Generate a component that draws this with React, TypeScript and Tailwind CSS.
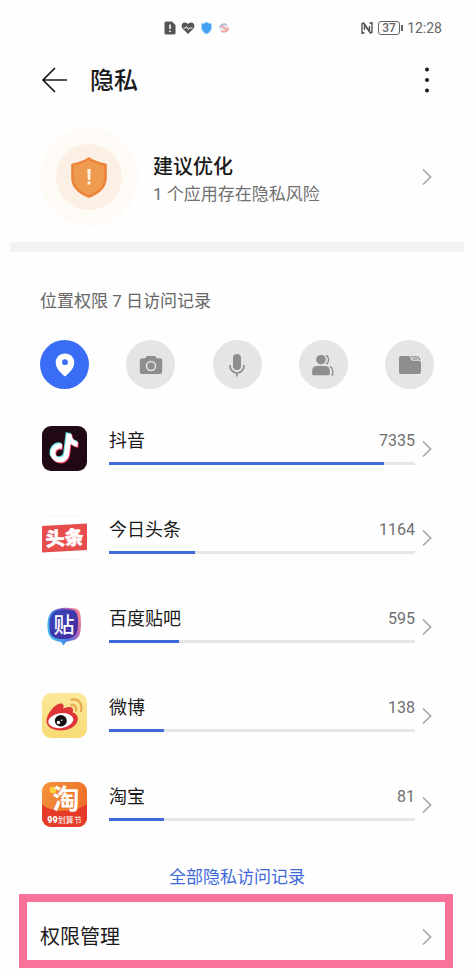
import { useState, type ReactNode } from "react";
import { FaTiktok } from "react-icons/fa6";

function Chevron() {
  return (
    <svg width="10" height="18" viewBox="0 0 10 18" fill="none" stroke="#a6a6a6" strokeWidth="1.6" aria-hidden="true" className="shrink-0">
      <path d="M1 1.5 8.7 9 1 16.5" />
    </svg>
  );
}

function StatusBar() {
  return (
    <div className="flex h-14 items-center pl-[164px] pr-8 text-[#666]">
      <div className="flex items-center gap-[5px]">
        <svg width="12" height="14" viewBox="0 0 12 14" aria-hidden="true">
          <path d="M2 .5h6l3.500 3.500v8A1.500 1.500 0 0 1 10 13.500H2A1.500 1.500 0 0 1 .5 12V2A1.500 1.500 0 0 1 2 .5Z" fill="#555" />
          <path d="M6 3.500v4.500M6 9.500v1.600" stroke="#fff" strokeWidth="1.600" />
        </svg>
        <svg width="14" height="14" viewBox="0 0 14 14" aria-hidden="true">
          <path d="M7 13 1.700 7.700C-.5 5 .8 1.500 3.800 1.500 5.300 1.500 6.400 2.300 7 3.300c.6-1 1.700-1.800 3.200-1.800 3 0 4.300 3.500 2.100 6.200Z" fill="#555" />
          <path d="M2.500 7h2l1-1.500 1.800 3 1.200-1.500h3" fill="none" stroke="#fff" strokeWidth="1" />
        </svg>
        <svg width="13" height="14" viewBox="0 0 13 14" aria-hidden="true">
          <path d="M6.500 1c1.700 1.200 3.300 1.500 5 1.600v4.200c0 3-2.300 5-5 6.200-2.700-1.200-5-3.200-5-6.200V2.600C3.200 2.500 4.800 2.200 6.500 1Z" fill="#42a0f2" stroke="#a8d5fb" />
        </svg>
        <svg width="12" height="12" viewBox="0 0 12 12" aria-hidden="true">
          <circle cx="6" cy="6" r="4" fill="#f1e3ea" />
          <path d="M2 6a4 4 0 0 1 6.500-3" fill="none" stroke="#a5b0dd" strokeWidth="1.400" />
          <path d="M10 5.500A4 4 0 0 1 3 8.600M3.500 3.500l5 4.500" fill="none" stroke="#ee9a90" strokeWidth="1.400" />
        </svg>
      </div>
      <div className="ml-auto flex items-center">
        <svg width="12" height="12" viewBox="0 0 12 12" fill="none" stroke="#555" aria-hidden="true">
          <path d="M3.600 10.800 1 11.300V1.700L2.500 1l6 8.500V4" strokeWidth="1.400" />
          <path d="M8.400 1.200 11 .7v9.600l-1.500.7-6-8.500V8" strokeWidth="1.400" />
        </svg>
        <div className="ml-[5px] flex h-[14px] w-[22px] items-center justify-center rounded-[3px] border border-[#666] text-[12px] font-medium leading-none">37</div>
        <div className="ml-px h-[6px] w-[2px] bg-[#666]" />
        <div className="ml-1 text-[14px] leading-5">12:28</div>
      </div>
    </div>
  );
}

function WarningShield() {
  return (
    <svg width="98" height="98" viewBox="0 0 98 98" aria-hidden="true" className="shrink-0">
      <circle cx="49" cy="49" r="49" fill="#fefaf5" />
      <circle cx="49" cy="49" r="33" fill="#fcefe4" />
      <path d="M49 30.500c5 3.400 11 5.200 16.500 6.200v12.800c0 9.800-7.300 15.500-16.500 19-9.200-3.500-16.500-9.200-16.500-19V36.700c5.500-1 11.500-2.800 16.500-6.200Z" fill="#ee9b50" stroke="#ee843a" strokeWidth="2.600" strokeLinejoin="round" />
      <path d="M47.200 41h3.600l-.7 11h-2.200Z" fill="#fff0dd" />
      <circle cx="49" cy="55" r="1.700" fill="#fff0dd" />
    </svg>
  );
}

const permissions: { name: string; icon: ReactNode }[] = [
  {
    name: "位置",
    icon: (
      <svg width="24" height="24" viewBox="0 0 24 24" aria-hidden="true">
        <path fillRule="evenodd" fill="currentColor" d="M12 .5c5.300 0 9.300 3.900 9.300 8.900 0 5.400-4.600 9.900-8.300 13.400a1.400 1.400 0 0 1-2 0C7.300 19.300 2.700 14.800 2.700 9.400 2.700 4.400 6.700.5 12 .5Zm0 5.800a2.900 2.900 0 1 0 0 5.800 2.900 2.900 0 0 0 0-5.800Z" />
      </svg>
    ),
  },
  {
    name: "相机",
    icon: (
      <svg width="24" height="24" viewBox="0 0 24 24" aria-hidden="true">
        <path fill="currentColor" d="M8.500 3h7c.8 0 1 .4 1.400 1.300.3.700.7 1 1.300 1h2.500A2.500 2.500 0 0 1 23.200 8v10.500a2.500 2.500 0 0 1-2.500 2.500H3.300A2.500 2.500 0 0 1 .8 18.500V8a2.500 2.500 0 0 1 2.500-2.700h2.500c.6 0 1-.3 1.300-1C7.500 3.400 7.700 3 8.500 3Z" />
        <circle cx="12" cy="13" r="4.500" fill="none" stroke="#e5e5e5" strokeWidth="1.500" />
      </svg>
    ),
  },
  {
    name: "麦克风",
    icon: (
      <svg width="24" height="24" viewBox="0 0 24 24" aria-hidden="true">
        <rect x="8" y="1" width="8" height="16" rx="4" fill="currentColor" />
        <path d="M5 12v1a7 7 0 0 0 14 0v-1M12 20v3.500" fill="none" stroke="currentColor" strokeWidth="1.700" />
      </svg>
    ),
  },
  {
    name: "联系人",
    icon: (
      <svg width="24" height="24" viewBox="0 0 24 24" aria-hidden="true">
        <circle cx="10" cy="6.700" r="4.800" fill="currentColor" />
        <path d="M6 13h8c3 0 4.800 2 4.800 4.800v3.200c0 .8-.5 1.200-1.200 1.200H2.400c-.7 0-1.200-.4-1.200-1.200v-3.200C1.200 15 3 13 6 13Z" fill="currentColor" />
        <path d="M15 2.300c3.400 1.500 3.400 7.300 0 8.800M19 13.600c2.200 1 2.700 2.400 2.700 4.400v3.800h-1.500" fill="none" stroke="currentColor" strokeWidth="1.300" />
      </svg>
    ),
  },
  {
    name: "存储",
    icon: (
      <svg width="24" height="24" viewBox="0 0 24 24" aria-hidden="true">
        <path d="M3 3h7c1 0 1.500.4 2 1.300L13.300 7c.3.600.7.700 1.300.7h6.200c1.400 0 2.200.9 2.200 2.300v8.600a2.500 2.500 0 0 1-2.500 2.500h-17A2.500 2.500 0 0 1 1 18.500V5c0-1.200.8-2 2-2Z" fill="currentColor" />
        <path d="M12.300 3.900h6.500c1.200 0 2 .6 2.300 1.700l.6 1.600" fill="none" stroke="currentColor" strokeWidth="1.300" />
        <path d="M14.500 6h5" fill="none" stroke="currentColor" strokeWidth="1.300" />
      </svg>
    ),
  },
];

function DouyinLogo() {
  return (
    <svg width="45" height="45" viewBox="0 0 45 45" aria-hidden="true">
      <rect width="45" height="45" rx="9" fill="#210815" />
      <g transform="rotate(7 22 22)">
        <FaTiktok x="6" y="6" size={30} color="#58e4e1" />
        <FaTiktok x="8" y="8" size={30} color="#ef3f60" />
        <FaTiktok x="7" y="7" size={30} color="#fff" />
      </g>
    </svg>
  );
}

function ToutiaoLogo() {
  return (
    <svg width="45" height="45" viewBox="0 0 45 45" aria-hidden="true">
      <path d="M7 .5h31M7 44.500h31" stroke="#f9f6f6" />
      <path d="M0 11 45 8.500V35L0 37.500Z" fill="#e84d4d" />
      <text x="22.500" y="30" textAnchor="middle" fill="#fff" stroke="#fff" strokeWidth=".5" fontSize="19" fontWeight="900" transform="rotate(-3 22.500 22.500)">头条</text>
    </svg>
  );
}

function TiebaLogo() {
  return (
    <svg width="45" height="45" viewBox="0 0 45 45" aria-hidden="true">
      <defs>
        <linearGradient id="tieba-edge" x1="0" y1=".8" x2="1" y2=".3">
          <stop offset="0" stopColor="#48c9f3" />
          <stop offset=".45" stopColor="#487fe3" />
          <stop offset=".7" stopColor="#a268c4" />
          <stop offset="1" stopColor="#f37f91" />
        </linearGradient>
        <linearGradient id="tieba-body" x1="0" y1="0" x2="1" y2="1">
          <stop offset="0" stopColor="#3546be" />
          <stop offset="1" stopColor="#4a2a9b" />
        </linearGradient>
      </defs>
      <path d="M15 5C20 3.500 27 3.500 33 4.500c5 1 6 5 6 15.500s-2 14-7 16c-3 1-6 1.200-8 2l-2.500 3.500L19 38C11 37 6 34 5.500 24 5 13 8 7 15 5Z" fill="url(#tieba-edge)" />
      <path d="M15 6.500c5-1.500 11-1.500 15.500-.5S36 11 36 19s-1.500 12.500-6.500 14.500-12.500 2-17 0S7.500 28 7.500 21 9 8.500 15 6.500Z" fill="url(#tieba-body)" />
      <text x="22" y="28" textAnchor="middle" fill="#fff" fontSize="21" fontWeight="500">贴</text>
    </svg>
  );
}

function WeiboLogo() {
  return (
    <svg width="45" height="45" viewBox="0 0 45 45" aria-hidden="true">
      <defs>
        <linearGradient id="weibo-bg" x1="0" y1="0" x2="0" y2="1">
          <stop offset="0" stopColor="#fce99c" />
          <stop offset="1" stopColor="#f8da73" />
        </linearGradient>
      </defs>
      <rect width="45" height="45" rx="9" fill="url(#weibo-bg)" />
      <path d="M4.500 27.500C5 20 13 11 18.500 10.500c3-.2 3.700 2.300 2.800 5 3.500-1.600 8.500-2.500 9.500.5.500 1.300.1 2.600-.3 3.600 3 .7 5.500 2.900 5.300 6.400C35.500 33 27 37.500 18.500 37.500 11 37.500 4 34 4.500 27.500Z" fill="#df3438" />
      <ellipse cx="18.800" cy="27.600" rx="12.500" ry="7.400" fill="#fff" transform="rotate(-8 18.800 27.600)" />
      <ellipse cx="18.800" cy="27.800" rx="6" ry="5.700" fill="#161214" />
      <circle cx="16.500" cy="29.500" r="1.700" fill="#fff" />
      <circle cx="19.700" cy="27.300" r=".8" fill="#fff" />
      <path d="M29.500 6.500c6.500-1.500 11.500 4.500 9.500 11.500M29.500 12c3.500-.6 5.500 2 4.500 5.500" fill="none" stroke="#e9ab52" strokeWidth="2.300" strokeLinecap="round" />
    </svg>
  );
}

function TaobaoLogo() {
  return (
    <svg width="45" height="45" viewBox="0 0 45 45" aria-hidden="true">
      <defs>
        <linearGradient id="taobao-bg" x1="0" y1="0" x2="1" y2=".6">
          <stop offset="0" stopColor="#f3943e" />
          <stop offset="1" stopColor="#ee6b26" />
        </linearGradient>
        <clipPath id="taobao-clip">
          <rect width="45" height="45" rx="9" />
        </clipPath>
      </defs>
      <g clipPath="url(#taobao-clip)">
        <rect width="45" height="45" fill="url(#taobao-bg)" />
        <path d="M0 22c6 8 32 10 45 0v23H0Z" fill="#e63b28" />
        <circle cx="11" cy="8" r="3.300" fill="#fbd13c" />
        <text x="24" y="27" textAnchor="middle" fill="#fff" fontSize="27" fontWeight="700">淘</text>
        <text x="22.500" y="41" textAnchor="middle" fill="#fff" fontSize="8" fontWeight="400">
          <tspan fontSize="9" fontWeight="900">99</tspan>划算节
        </text>
      </g>
    </svg>
  );
}

const apps = [
  { name: "抖音", count: 7335, share: 90, logo: <DouyinLogo /> },
  { name: "今日头条", count: 1164, share: 28, logo: <ToutiaoLogo /> },
  { name: "百度贴吧", count: 595, share: 23, logo: <TiebaLogo /> },
  { name: "微博", count: 138, share: 18, logo: <WeiboLogo /> },
  { name: "淘宝", count: 81, share: 18, logo: <TaobaoLogo /> },
];

export default function App() {
  const [active, setActive] = useState(0);

  return (
    <div className="min-h-screen bg-[#fefefe] pb-2 font-['Roboto','Noto_Sans_CJK_SC',sans-serif] text-[#1a1a1a]">
      <StatusBar />

      <header className="flex h-12 items-center pl-[42px] pr-10">
        <button type="button" aria-label="返回">
          <svg width="25" height="26" viewBox="0 0 25 26" fill="none" stroke="#1a1a1a" strokeWidth="1.700" aria-hidden="true">
            <path d="M25 13H1.500M13 1 1 13l12 12" />
          </svg>
        </button>
        <h1 className="ml-[23px] pt-[2px] text-[24px] font-medium leading-8">隐私</h1>
        <button type="button" aria-label="更多" className="ml-auto">
          <svg width="14" height="26" viewBox="0 0 14 26" fill="#1a1a1a" aria-hidden="true">
            <circle cx="7" cy="2.500" r="2" />
            <circle cx="7" cy="13" r="2" />
            <circle cx="7" cy="23.500" r="2" />
          </svg>
        </button>
      </header>

      <button type="button" className="flex w-full items-center pb-4 pl-10 pr-[42px] pt-6 text-left">
        <WarningShield />
        <span className="ml-[15px] flex flex-1 flex-col pt-[6px]">
          <span className="text-[20px] font-medium leading-7">建议优化</span>
          <span className="text-[17px] leading-[26px] text-[#707070]">1 个应用存在隐私风险</span>
        </span>
        <Chevron />
      </button>

      <div className="mx-[10px] h-[10px] bg-[#f3f3f3]" />

      <section className="pt-9">
        <h2 className="px-10 text-[17px] leading-[26px] text-[#666]">位置权限 7 日访问记录</h2>

        <div className="mt-[26px] flex justify-between px-10">
          {permissions.map((permission, index) => (
            <button
              key={permission.name}
              type="button"
              aria-label={permission.name}
              aria-pressed={index === active}
              onClick={() => setActive(index)}
              className={
                index === active
                  ? "flex size-[49px] items-center justify-center rounded-full bg-[#3a6df5] text-white"
                  : "flex size-[49px] items-center justify-center rounded-full bg-[#e5e5e5] text-[#8e8e8e]"
              }
            >
              {permission.icon}
            </button>
          ))}
        </div>

        <ul className="mt-[15px]">
          {apps.map((app) => (
            <li key={app.name}>
              <button type="button" className="flex h-[89px] w-full items-center px-[42px] text-left">
                <span className="size-[45px] shrink-0">{app.logo}</span>
                <span className="ml-[22px] flex flex-1 flex-col gap-[9px] pb-[4px]">
                  <span className="flex items-center justify-between">
                    <span className="text-[18px] leading-6">{app.name}</span>
                    <span className="text-[16px] leading-6 text-[#707070]">{app.count}</span>
                  </span>
                  <span className="block h-[3px] bg-[#e6e6e6]">
                    <span className="block h-full bg-[#3f69d9]" style={{ width: `${app.share}%` }} />
                  </span>
                </span>
                <span className="ml-[7px]">
                  <Chevron />
                </span>
              </button>
            </li>
          ))}
        </ul>
      </section>

      <div className="flex justify-center pt-4">
        <a href="#records" className="text-[17px] leading-6 text-[#3f69d9]">全部隐私访问记录</a>
      </div>

      <button type="button" className="mt-[5px] flex w-full pl-[19px] pr-[21px] text-left">
        <span className="flex h-[74px] flex-1 items-center border-8 border-[#f87299] px-[13px] pt-3">
          <span className="text-[20px] leading-7">权限管理</span>
          <span className="ml-auto">
            <Chevron />
          </span>
        </span>
      </button>
    </div>
  );
}
